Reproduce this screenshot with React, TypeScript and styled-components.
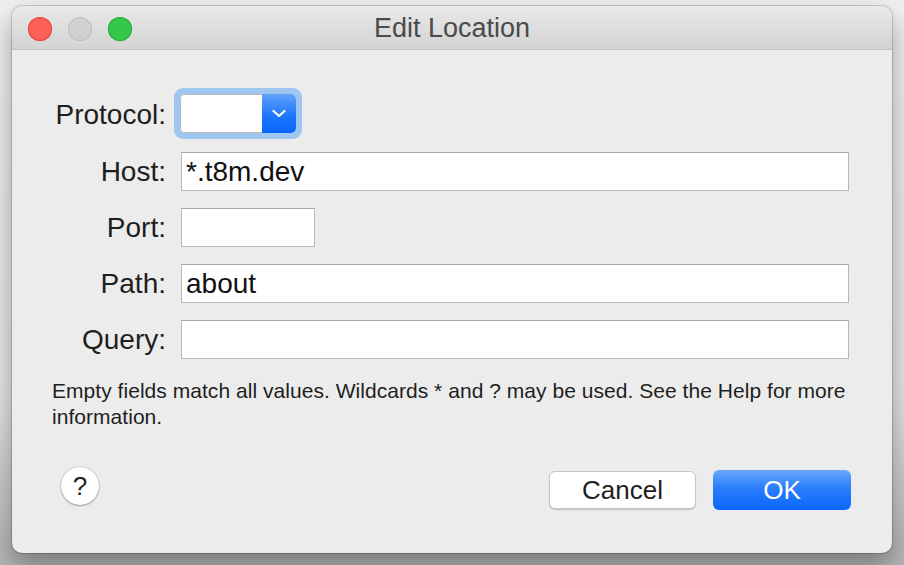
import React from "react";
import styled, { createGlobalStyle } from "styled-components";

const GlobalStyle = createGlobalStyle`
  html, body {
    margin: 0;
    padding: 0;
    background: linear-gradient(180deg, #f1f1f1 0%, #e6e6e6 70%, #b4b4b4 100%);
    font-family: "Liberation Sans", Arial, sans-serif;
    overflow: hidden;
  }
`;

const Page = styled.div`
  width: 904px;
  height: 565px;
  padding: 6px 12px 0 12px;
  box-sizing: border-box;
`;

const Window = styled.div`
  width: 880px;
  height: 547px;
  background: #ececec;
  border-radius: 10px;
  overflow: hidden;
  box-shadow: 0 0 0 1px rgba(0, 0, 0, 0.16), 0 12px 28px rgba(0, 0, 0, 0.35);
  display: flex;
  flex-direction: column;
`;

const TitleBar = styled.div`
  height: 44px;
  flex-shrink: 0;
  box-sizing: border-box;
  padding: 2px 0 0 16px;
  background: linear-gradient(180deg, #e9e9e9 0%, #d3d3d3 100%);
  border-bottom: 1px solid #c3c3c3;
  display: flex;
  align-items: center;
  position: relative;
`;

const Lights = styled.div`
  display: flex;
  gap: 16px;
`;

const Light = styled.span<{ $color: string; $edge: string }>`
  width: 24px;
  height: 24px;
  border-radius: 50%;
  background: ${(p) => p.$color};
  box-shadow: inset 0 0 0 1px ${(p) => p.$edge};
`;

const Title = styled.div`
  position: absolute;
  left: 0;
  right: 0;
  text-align: center;
  font-size: 27px;
  color: #4a4a4a;
  pointer-events: none;
`;

const Body = styled.div`
  flex: 1;
  padding: 44px 43px 0 40px;
  display: flex;
  flex-direction: column;
`;

const FormGrid = styled.div`
  display: grid;
  grid-template-columns: 114px 1fr;
  column-gap: 15px;
  row-gap: 17px;
  align-items: center;
`;

const Label = styled.label`
  text-align: right;
  font-size: 28px;
  color: #1e1e1e;
  white-space: nowrap;
`;

const Field = styled.input<{ $width?: number }>`
  box-sizing: border-box;
  height: 39px;
  width: ${(p) => (p.$width ? `${p.$width}px` : "100%")};
  border: 1px solid #b9b9b9;
  border-top-color: #aaaaaa;
  background: #fff;
  font-family: "Liberation Sans", Arial, sans-serif;
  font-size: 28px;
  color: #111;
  padding: 0 4px;
  outline: none;
`;

const PopupRing = styled.div`
  justify-self: start;
  margin: -6px 0 -4px -7px;
  padding: 6px;
  border-radius: 9px;
  background: #9ec6f0;
`;

const Popup = styled.div`
  width: 116px;
  height: 39px;
  display: flex;
  border-radius: 5px;
  overflow: hidden;
  background: #fff;
`;

const PopupValue = styled.div`
  flex: 1;
  border: 1px solid #b9b9b9;
  border-right: none;
  border-radius: 5px 0 0 5px;
  background: #fff;
`;

const PopupArrow = styled.div`
  width: 34px;
  background: linear-gradient(180deg, #62a2fb 0%, #1f76fd 55%, #0766fe 100%);
  display: flex;
  align-items: center;
  justify-content: center;
`;

const Hint = styled.p`
  margin: 19px 0 0 0;
  font-size: 21px;
  letter-spacing: 0.04px;
  line-height: 26px;
  color: #1e1e1e;
`;

const Footer = styled.div`
  margin-top: 40px;
  display: flex;
  align-items: center;
`;

const HelpButton = styled.button`
  align-self: flex-start;
  width: 38px;
  height: 38px;
  margin: -3px 0 0 9px;
  border-radius: 50%;
  border: none;
  background: #fff;
  box-shadow: 0 0 0 0.5px rgba(0, 0, 0, 0.18), 0 1px 2px rgba(0, 0, 0, 0.3);
  font-family: "Liberation Sans", Arial, sans-serif;
  font-size: 26px;
  color: #222;
  padding: 0;
`;

const Spacer = styled.div`
  flex: 1;
`;

const Buttons = styled.div`
  display: flex;
  align-items: center;
  gap: 17px;
  margin-right: -2px;
`;

const Button = styled.button<{ $primary?: boolean; $width: number }>`
  box-sizing: border-box;
  width: ${(p) => p.$width}px;
  height: ${(p) => (p.$primary ? 40 : 38)}px;
  border-radius: 6px;
  font-family: "Liberation Sans", Arial, sans-serif;
  font-size: 26px;
  padding: 0;
  border: ${(p) => (p.$primary ? "none" : "1px solid #c6c6c6")};
  color: ${(p) => (p.$primary ? "#fff" : "#1e1e1e")};
  background: ${(p) =>
    p.$primary
      ? "linear-gradient(180deg, #6aa8fb 0%, #2a7dfc 45%, #0a67fe 100%)"
      : "#fff"};
  box-shadow: ${(p) =>
    p.$primary ? "none" : "0 1px 1px rgba(0, 0, 0, 0.18)"};
`;

export default function App() {
  return (
    <>
      <GlobalStyle />
      <Page>
        <Window>
          <TitleBar>
            <Lights>
              <Light $color="#fe5f57" $edge="#e2463f" />
              <Light $color="#d0d0d0" $edge="#bdbdbd" />
              <Light $color="#34c84a" $edge="#27aa35" />
            </Lights>
            <Title>Edit Location</Title>
          </TitleBar>
          <Body>
            <FormGrid>
              <Label>Protocol:</Label>
              <PopupRing>
                <Popup>
                  <PopupValue />
                  <PopupArrow>
                    <svg width="14" height="9" viewBox="0 0 14 9">
                      <path
                        d="M1.5 2 L7 7 L12.5 2"
                        fill="none"
                        stroke="#fff"
                        strokeWidth="2.2"
                        strokeLinecap="round"
                        strokeLinejoin="round"
                      />
                    </svg>
                  </PopupArrow>
                </Popup>
              </PopupRing>
              <Label>Host:</Label>
              <Field defaultValue="*.t8m.dev" />
              <Label>Port:</Label>
              <Field $width={134} />
              <Label>Path:</Label>
              <Field defaultValue="about" />
              <Label>Query:</Label>
              <Field />
            </FormGrid>
            <Hint>
              Empty fields match all values. Wildcards * and ? may be used. See
              the Help for more information.
            </Hint>
            <Footer>
              <HelpButton>?</HelpButton>
              <Spacer />
              <Buttons>
                <Button $width={147}>Cancel</Button>
                <Button $primary $width={138}>
                  OK
                </Button>
              </Buttons>
            </Footer>
          </Body>
        </Window>
      </Page>
    </>
  );
}
